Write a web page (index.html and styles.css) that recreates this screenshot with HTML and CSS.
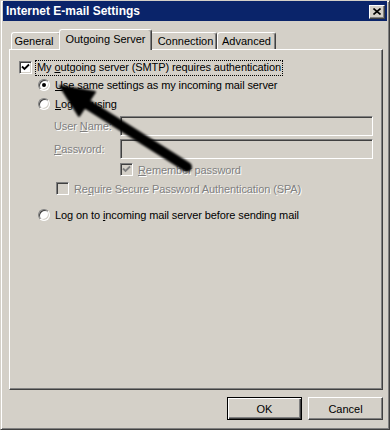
FILE: index.html
```html
<!doctype html>
<html>
<head>
<meta charset="utf-8">
<title>Internet E-mail Settings</title>
<link rel="stylesheet" href="styles.css">
</head>
<body>
<div class="window">
	<div class="titlebar">
		<span class="title">Internet E-mail Settings</span>
		<span class="close"><svg width="8" height="7" viewBox="0 0 8 7"><path d="M0.5 0.5 L7.5 6.5 M7.5 0.5 L0.5 6.5" stroke="#000" stroke-width="1.6"/></svg></span>
	</div>
	<div class="body">
		<div class="tabs">
			<span class="tab t-general">General</span>
			<span class="tab t-out on">Outgoing Server</span>
			<span class="tab t-conn">Connection</span>
			<span class="tab t-adv">Advanced</span>
		</div>
		<div class="panel">
			<div class="row r1">
				<span class="chk"><svg width="9" height="9" viewBox="0 0 9 9"><path d="M1 3.5 L3.5 6 L8 1.5" fill="none" stroke="#000" stroke-width="1.8"/></svg></span>
				<span class="focus">My <u>o</u>utgoing server (SMTP) requires authentication</span>
			</div>
			<div class="row r2 ind1">
				<span class="radio sel"></span>
				<span class="lbl"><u>U</u>se same settings as my incoming mail server</span>
			</div>
			<div class="row r3 ind1">
				<span class="radio"></span>
				<span class="lbl"><u>L</u>og on using</span>
			</div>
			<div class="row r4 ind2">
				<span class="dis fld">User <u>N</u>ame:</span>
				<span class="input"></span>
			</div>
			<div class="row r5 ind2">
				<span class="dis fld"><u>P</u>assword:</span>
				<span class="input"></span>
			</div>
			<div class="row r6 ind3">
				<span class="chk off"><svg width="9" height="9" viewBox="0 0 9 9"><path d="M1 3.5 L3.5 6 L8 1.5" fill="none" stroke="#808080" stroke-width="1.8"/></svg></span>
				<span class="dis lbl"><u>R</u>emember password</span>
			</div>
			<div class="row r7 ind4">
				<span class="chk off"></span>
				<span class="dis lbl">Re<u>q</u>uire Secure Password Authentication (SPA)</span>
			</div>
			<div class="row r8 ind1">
				<span class="radio"></span>
				<span class="lbl">Log on to <u>i</u>ncoming mail server before sending mail</span>
			</div>
		</div>
		<div class="buttons">
			<span class="btn def">OK</span>
			<span class="btn">Cancel</span>
		</div>
	</div>
	<svg class="arrow" width="390" height="430" viewBox="0 0 390 430">
		<defs><filter id="soft"><feGaussianBlur stdDeviation="0.9"/></filter></defs>
		<g filter="url(#soft)" fill="#000" stroke="#000">
			<line x1="187" y1="167" x2="82" y2="101" stroke-width="10" stroke-linecap="round"/>
			<polygon points="60,86 95,92 79,116" stroke-width="2" stroke-linejoin="round"/>
		</g>
	</svg>
</div>
</body>
</html>
```

FILE: styles.css
```css
*{margin:0;padding:0;box-sizing:border-box;}
body{background:#d4d0c8;font:11px "Liberation Sans",Arial,sans-serif;color:#000;}
u{text-decoration:underline;}
.window{position:relative;width:390px;height:430px;background:#d4d0c8;border:1px solid;border-color:#d4d0c8 #404040 #404040 #d4d0c8;box-shadow:inset 1px 1px #fff,inset -1px -1px #808080;padding:0 2px 2px 2px;}
.titlebar{height:20px;background:#0a246a;display:flex;align-items:center;justify-content:space-between;padding:0 2px 0 2px;}
.title{color:#fff;font-weight:bold;font-size:12px;padding-left:1px;}
.close{width:16px;height:14px;background:#d4d0c8;border:1px solid;border-color:#fff #404040 #404040 #fff;box-shadow:inset -1px -1px #808080;display:flex;align-items:center;justify-content:center;margin-top:1px;}
.body{padding:0 4px 0 6px;}
.tabs{height:20px;margin-top:8px;display:flex;align-items:flex-end;padding-left:2px;position:relative;z-index:1;}
.tab{height:17px;border:1px solid;border-color:#fff #404040 transparent #fff;border-bottom:0;box-shadow:inset -1px 0 #808080;border-radius:3px 3px 0 0;display:flex;align-items:center;justify-content:center;background:#d4d0c8;padding-bottom:1px;}
.t-general{width:50px;padding-right:4px;}
.t-out{width:93px;}
.t-conn{width:67px;padding-left:4px;}
.t-adv{width:59px;}
.tab.on{height:21px;margin:0 -2px -1px -2px;position:relative;z-index:2;padding-bottom:3px;}
.panel{height:341px;border:1px solid;border-color:#fff #404040 #404040 #fff;box-shadow:inset -1px -1px #808080;padding:10px 0 0 9px;letter-spacing:-0.1px;}
.row{display:flex;align-items:center;}
.r1{height:15px;}
.r2{height:14px;margin-top:3px;}
.r3{height:14px;margin-top:5px;}
.r4{height:20px;margin-top:5px;}
.r5{height:20px;margin-top:3px;}
.r6{height:15px;margin-top:3px;}
.r7{height:15px;margin-top:4px;}
.r8{height:14px;margin-top:12px;}
.ind1{padding-left:19px;}
.ind2{padding-left:35px;}
.ind3{padding-left:101px;}
.ind4{padding-left:37px;}
.chk{width:13px;height:13px;background:#fff;border:1px solid;border-color:#808080 #fff #fff #808080;box-shadow:inset 1px 1px #404040,inset -1px -1px #d4d0c8;display:flex;align-items:center;justify-content:center;flex:none;}
.chk.off{background:#d4d0c8;}
.focus{margin-left:3px;padding:0 1px 1px 1px;border:1px dotted #000;line-height:13px;}
.radio{width:12px;height:12px;border-radius:50%;background:#fff;border:1px solid;border-color:#808080 #fff #fff #808080;box-shadow:inset 1px 1px #404040,inset -1px -1px #d4d0c8;flex:none;display:flex;align-items:center;justify-content:center;}
.radio.sel:after{content:'';width:4px;height:4px;border-radius:50%;background:#000;}
.lbl{margin-left:5px;}
.dis{color:#808080;text-shadow:1px 1px 0 #fff;}
.fld{width:66px;}
.input{width:253px;height:20px;border:1px solid;border-color:#808080 #fff #fff #808080;box-shadow:inset 1px 1px #404040,inset -1px -1px #d4d0c8;background:#d4d0c8;}
.buttons{display:flex;justify-content:flex-end;gap:6px;margin-top:7px;}
.btn{width:75px;height:23px;border:1px solid;border-color:#fff #404040 #404040 #fff;box-shadow:inset -1px -1px #808080;display:flex;align-items:center;justify-content:center;}
.btn.def{border:1px solid #000;box-shadow:inset 1px 1px #fff,inset -1px -1px #404040,inset -2px -2px #808080;}
.arrow{position:absolute;left:-1px;top:-1px;pointer-events:none;}
```
